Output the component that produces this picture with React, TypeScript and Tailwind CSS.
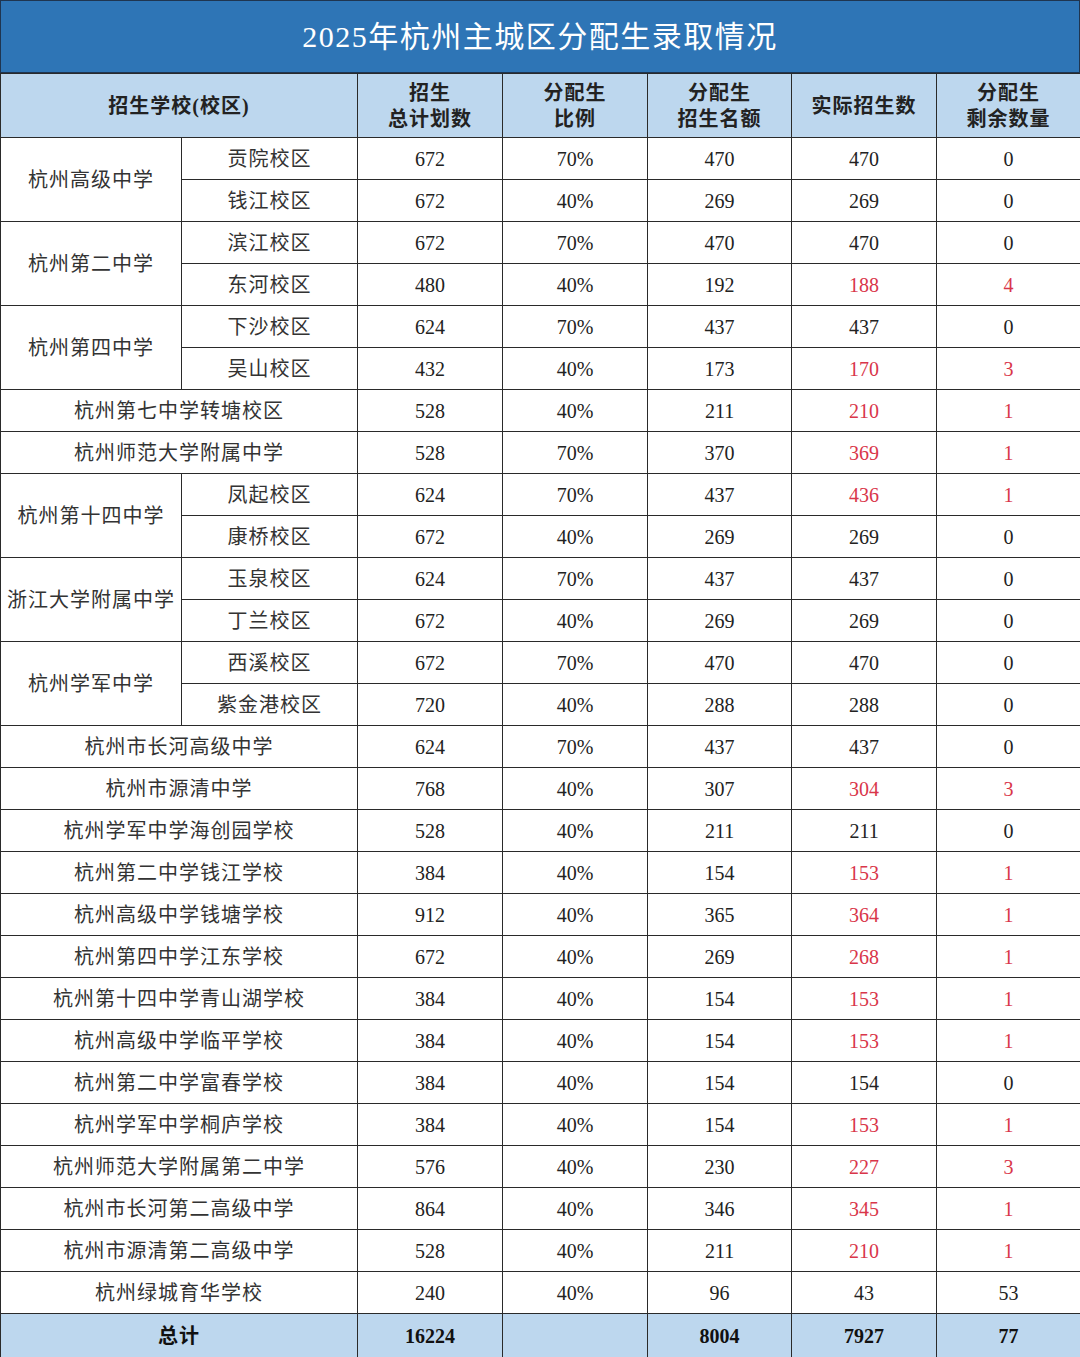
type Row = {
  school?: string;
  span?: number;
  campus?: string;
  plan: string;
  ratio: string;
  quota: string;
  actual: string;
  left: string;
  red?: boolean;
};

const rows: Row[] = [
  { school: '杭州高级中学', span: 2, campus: '贡院校区', plan: '672', ratio: '70%', quota: '470', actual: '470', left: '0' },
  { campus: '钱江校区', plan: '672', ratio: '40%', quota: '269', actual: '269', left: '0' },
  { school: '杭州第二中学', span: 2, campus: '滨江校区', plan: '672', ratio: '70%', quota: '470', actual: '470', left: '0' },
  { campus: '东河校区', plan: '480', ratio: '40%', quota: '192', actual: '188', left: '4', red: true },
  { school: '杭州第四中学', span: 2, campus: '下沙校区', plan: '624', ratio: '70%', quota: '437', actual: '437', left: '0' },
  { campus: '吴山校区', plan: '432', ratio: '40%', quota: '173', actual: '170', left: '3', red: true },
  { school: '杭州第七中学转塘校区', plan: '528', ratio: '40%', quota: '211', actual: '210', left: '1', red: true },
  { school: '杭州师范大学附属中学', plan: '528', ratio: '70%', quota: '370', actual: '369', left: '1', red: true },
  { school: '杭州第十四中学', span: 2, campus: '凤起校区', plan: '624', ratio: '70%', quota: '437', actual: '436', left: '1', red: true },
  { campus: '康桥校区', plan: '672', ratio: '40%', quota: '269', actual: '269', left: '0' },
  { school: '浙江大学附属中学', span: 2, campus: '玉泉校区', plan: '624', ratio: '70%', quota: '437', actual: '437', left: '0' },
  { campus: '丁兰校区', plan: '672', ratio: '40%', quota: '269', actual: '269', left: '0' },
  { school: '杭州学军中学', span: 2, campus: '西溪校区', plan: '672', ratio: '70%', quota: '470', actual: '470', left: '0' },
  { campus: '紫金港校区', plan: '720', ratio: '40%', quota: '288', actual: '288', left: '0' },
  { school: '杭州市长河高级中学', plan: '624', ratio: '70%', quota: '437', actual: '437', left: '0' },
  { school: '杭州市源清中学', plan: '768', ratio: '40%', quota: '307', actual: '304', left: '3', red: true },
  { school: '杭州学军中学海创园学校', plan: '528', ratio: '40%', quota: '211', actual: '211', left: '0' },
  { school: '杭州第二中学钱江学校', plan: '384', ratio: '40%', quota: '154', actual: '153', left: '1', red: true },
  { school: '杭州高级中学钱塘学校', plan: '912', ratio: '40%', quota: '365', actual: '364', left: '1', red: true },
  { school: '杭州第四中学江东学校', plan: '672', ratio: '40%', quota: '269', actual: '268', left: '1', red: true },
  { school: '杭州第十四中学青山湖学校', plan: '384', ratio: '40%', quota: '154', actual: '153', left: '1', red: true },
  { school: '杭州高级中学临平学校', plan: '384', ratio: '40%', quota: '154', actual: '153', left: '1', red: true },
  { school: '杭州第二中学富春学校', plan: '384', ratio: '40%', quota: '154', actual: '154', left: '0' },
  { school: '杭州学军中学桐庐学校', plan: '384', ratio: '40%', quota: '154', actual: '153', left: '1', red: true },
  { school: '杭州师范大学附属第二中学', plan: '576', ratio: '40%', quota: '230', actual: '227', left: '3', red: true },
  { school: '杭州市长河第二高级中学', plan: '864', ratio: '40%', quota: '346', actual: '345', left: '1', red: true },
  { school: '杭州市源清第二高级中学', plan: '528', ratio: '40%', quota: '211', actual: '210', left: '1', red: true },
  { school: '杭州绿城育华学校', plan: '240', ratio: '40%', quota: '96', actual: '43', left: '53' },
];

const cell = 'border border-[#2a2a2a] text-center align-middle p-0';

export default function App() {
  return (
    <div
      className="w-[1080px] h-[1357px] bg-white text-[#333] overflow-hidden"
      style={{ fontFamily: '"Liberation Serif", "Noto Sans CJK SC", serif' }}
    >
      <div className="h-[73px] flex items-center justify-center bg-[#2e75b6] border border-[#1f3550] text-white text-[30px] tracking-[1.5px]">
        2025年杭州主城区分配生录取情况
      </div>
      <table className="w-[1080px] table-fixed border-collapse">
        <colgroup>
          <col className="w-[181px]" />
          <col className="w-[176px]" />
          <col className="w-[145px]" />
          <col className="w-[145px]" />
          <col className="w-[144px]" />
          <col className="w-[145px]" />
          <col className="w-[144px]" />
        </colgroup>
        <thead>
          <tr className="h-[64px] bg-[#bdd7ee] font-bold text-[20px] leading-[26px] text-[#222] tracking-[1px]">
            <th colSpan={2} className={cell}>招生学校(校区)</th>
            <th className={cell}>招生<br />总计划数</th>
            <th className={cell}>分配生<br />比例</th>
            <th className={cell}>分配生<br />招生名额</th>
            <th className={cell}>实际招生数</th>
            <th className={cell}>分配生<br />剩余数量</th>
          </tr>
        </thead>
        <tbody className="text-[20px]">
          {rows.map((r, i) => (
            <tr key={i} className="h-[42px]">
              {r.school && (
                <td
                  className={`${cell} tracking-[1px]`}
                  rowSpan={r.span ?? 1}
                  colSpan={r.campus ? 1 : 2}
                >
                  {r.school}
                </td>
              )}
              {r.campus && <td className={`${cell} tracking-[1px]`}>{r.campus}</td>}
              <td className={`${cell} text-[#222]`}>{r.plan}</td>
              <td className={`${cell} text-[#222]`}>{r.ratio}</td>
              <td className={`${cell} text-[#222]`}>{r.quota}</td>
              <td className={`${cell} ${r.red ? 'text-[#d9364a]' : 'text-[#222]'}`}>{r.actual}</td>
              <td className={`${cell} ${r.red ? 'text-[#d9364a]' : 'text-[#222]'}`}>{r.left}</td>
            </tr>
          ))}
          <tr className="h-[44px] bg-[#bdd7ee] font-bold text-[#111]">
            <td colSpan={2} className={`${cell} tracking-[1px]`}>总计</td>
            <td className={cell}>16224</td>
            <td className={cell}></td>
            <td className={cell}>8004</td>
            <td className={cell}>7927</td>
            <td className={cell}>77</td>
          </tr>
        </tbody>
      </table>
    </div>
  );
}
